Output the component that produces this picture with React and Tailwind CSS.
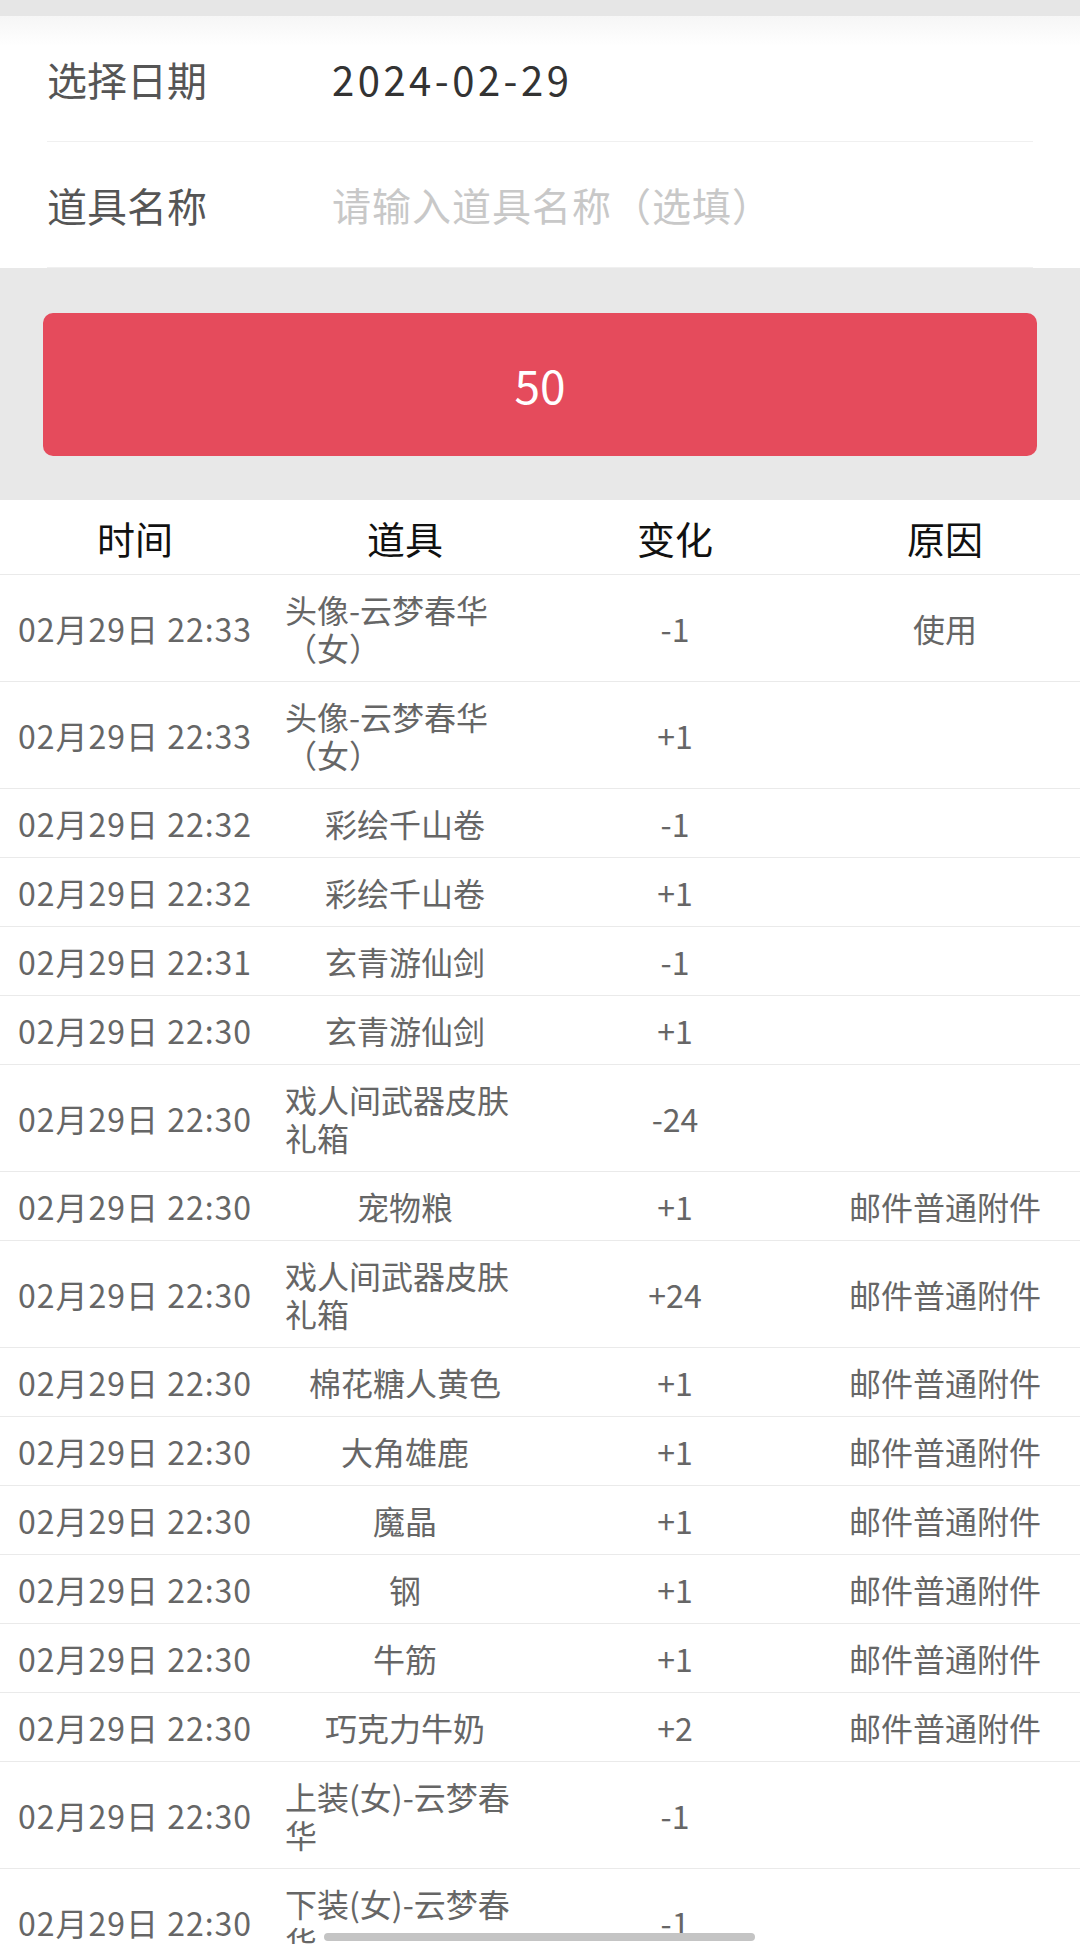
import React from 'react';

const rows = [
  { time: '02月29日 22:33', item: '头像-云梦春华（女）', change: '-1', reason: '使用' },
  { time: '02月29日 22:33', item: '头像-云梦春华（女）', change: '+1', reason: '' },
  { time: '02月29日 22:32', item: '彩绘千山卷', change: '-1', reason: '' },
  { time: '02月29日 22:32', item: '彩绘千山卷', change: '+1', reason: '' },
  { time: '02月29日 22:31', item: '玄青游仙剑', change: '-1', reason: '' },
  { time: '02月29日 22:30', item: '玄青游仙剑', change: '+1', reason: '' },
  { time: '02月29日 22:30', item: '戏人间武器皮肤礼箱', change: '-24', reason: '' },
  { time: '02月29日 22:30', item: '宠物粮', change: '+1', reason: '邮件普通附件' },
  { time: '02月29日 22:30', item: '戏人间武器皮肤礼箱', change: '+24', reason: '邮件普通附件' },
  { time: '02月29日 22:30', item: '棉花糖人黄色', change: '+1', reason: '邮件普通附件' },
  { time: '02月29日 22:30', item: '大角雄鹿', change: '+1', reason: '邮件普通附件' },
  { time: '02月29日 22:30', item: '魔晶', change: '+1', reason: '邮件普通附件' },
  { time: '02月29日 22:30', item: '钢', change: '+1', reason: '邮件普通附件' },
  { time: '02月29日 22:30', item: '牛筋', change: '+1', reason: '邮件普通附件' },
  { time: '02月29日 22:30', item: '巧克力牛奶', change: '+2', reason: '邮件普通附件' },
  { time: '02月29日 22:30', item: '上装(女)-云梦春华', change: '-1', reason: '' },
  { time: '02月29日 22:30', item: '下装(女)-云梦春华', change: '-1', reason: '' },
];

function FormRow({ label, children }) {
  return (
    <div className="flex items-center h-[126px] border-b border-[#f0f0f0]">
      <div className="w-[285px] shrink-0 text-[40px] text-[#555]">{label}</div>
      <div className="flex-1">{children}</div>
    </div>
  );
}

export default function App() {
  return (
    <div
      className="relative w-[1080px] h-[1944px] overflow-hidden bg-white"
      style={{ fontFamily: '"Noto Sans CJK SC", "Noto Sans", sans-serif' }}
    >
      {/* top strip */}
      <div className="h-[16px] bg-[#e6e6e6]" />

      {/* Filter form */}
      <div className="px-[47px] bg-gradient-to-b from-[#f6f6f6] to-white to-[12%]">
        <FormRow label="选择日期">
          <span className="text-[40px] text-[#333] tracking-[3.5px]">2024-02-29</span>
        </FormRow>
        <FormRow label="道具名称">
          <span className="text-[39px] text-[#c8c8c8] tracking-[1px]">请输入道具名称（选填）</span>
        </FormRow>
      </div>

      {/* Count button */}
      <div className="bg-[#e8e8e8] px-[43px] pt-[45px] pb-[44px]">
        <div className="h-[143px] rounded-[10px] bg-[#e54b5c] flex items-center justify-center">
          <span className="text-[46px] text-white">50</span>
        </div>
      </div>

      {/* Table */}
      <div className="grid grid-cols-4 h-[75px] items-center border-b border-[#eaeaea] text-[38px] text-[#111] text-center">
        <div>时间</div>
        <div>道具</div>
        <div>变化</div>
        <div>原因</div>
      </div>
      {rows.map((r, i) => (
        <div
          key={i}
          className="grid grid-cols-4 items-center py-[15px] border-b border-[#eaeaea] text-[32px] leading-[38px] text-[#666] text-center"
        >
          <div className="whitespace-nowrap tracking-[1px]">{r.time}</div>
          <div className="flex justify-center px-[12px]">
            <span className="inline-block max-w-[240px] text-left">{r.item}</span>
          </div>
          <div>{r.change}</div>
          <div>{r.reason}</div>
        </div>
      ))}

      {/* home indicator */}
      <div className="absolute left-[324px] bottom-[3px] w-[431px] h-[8px] rounded-full bg-[#c4c4c4]" />
    </div>
  );
}
